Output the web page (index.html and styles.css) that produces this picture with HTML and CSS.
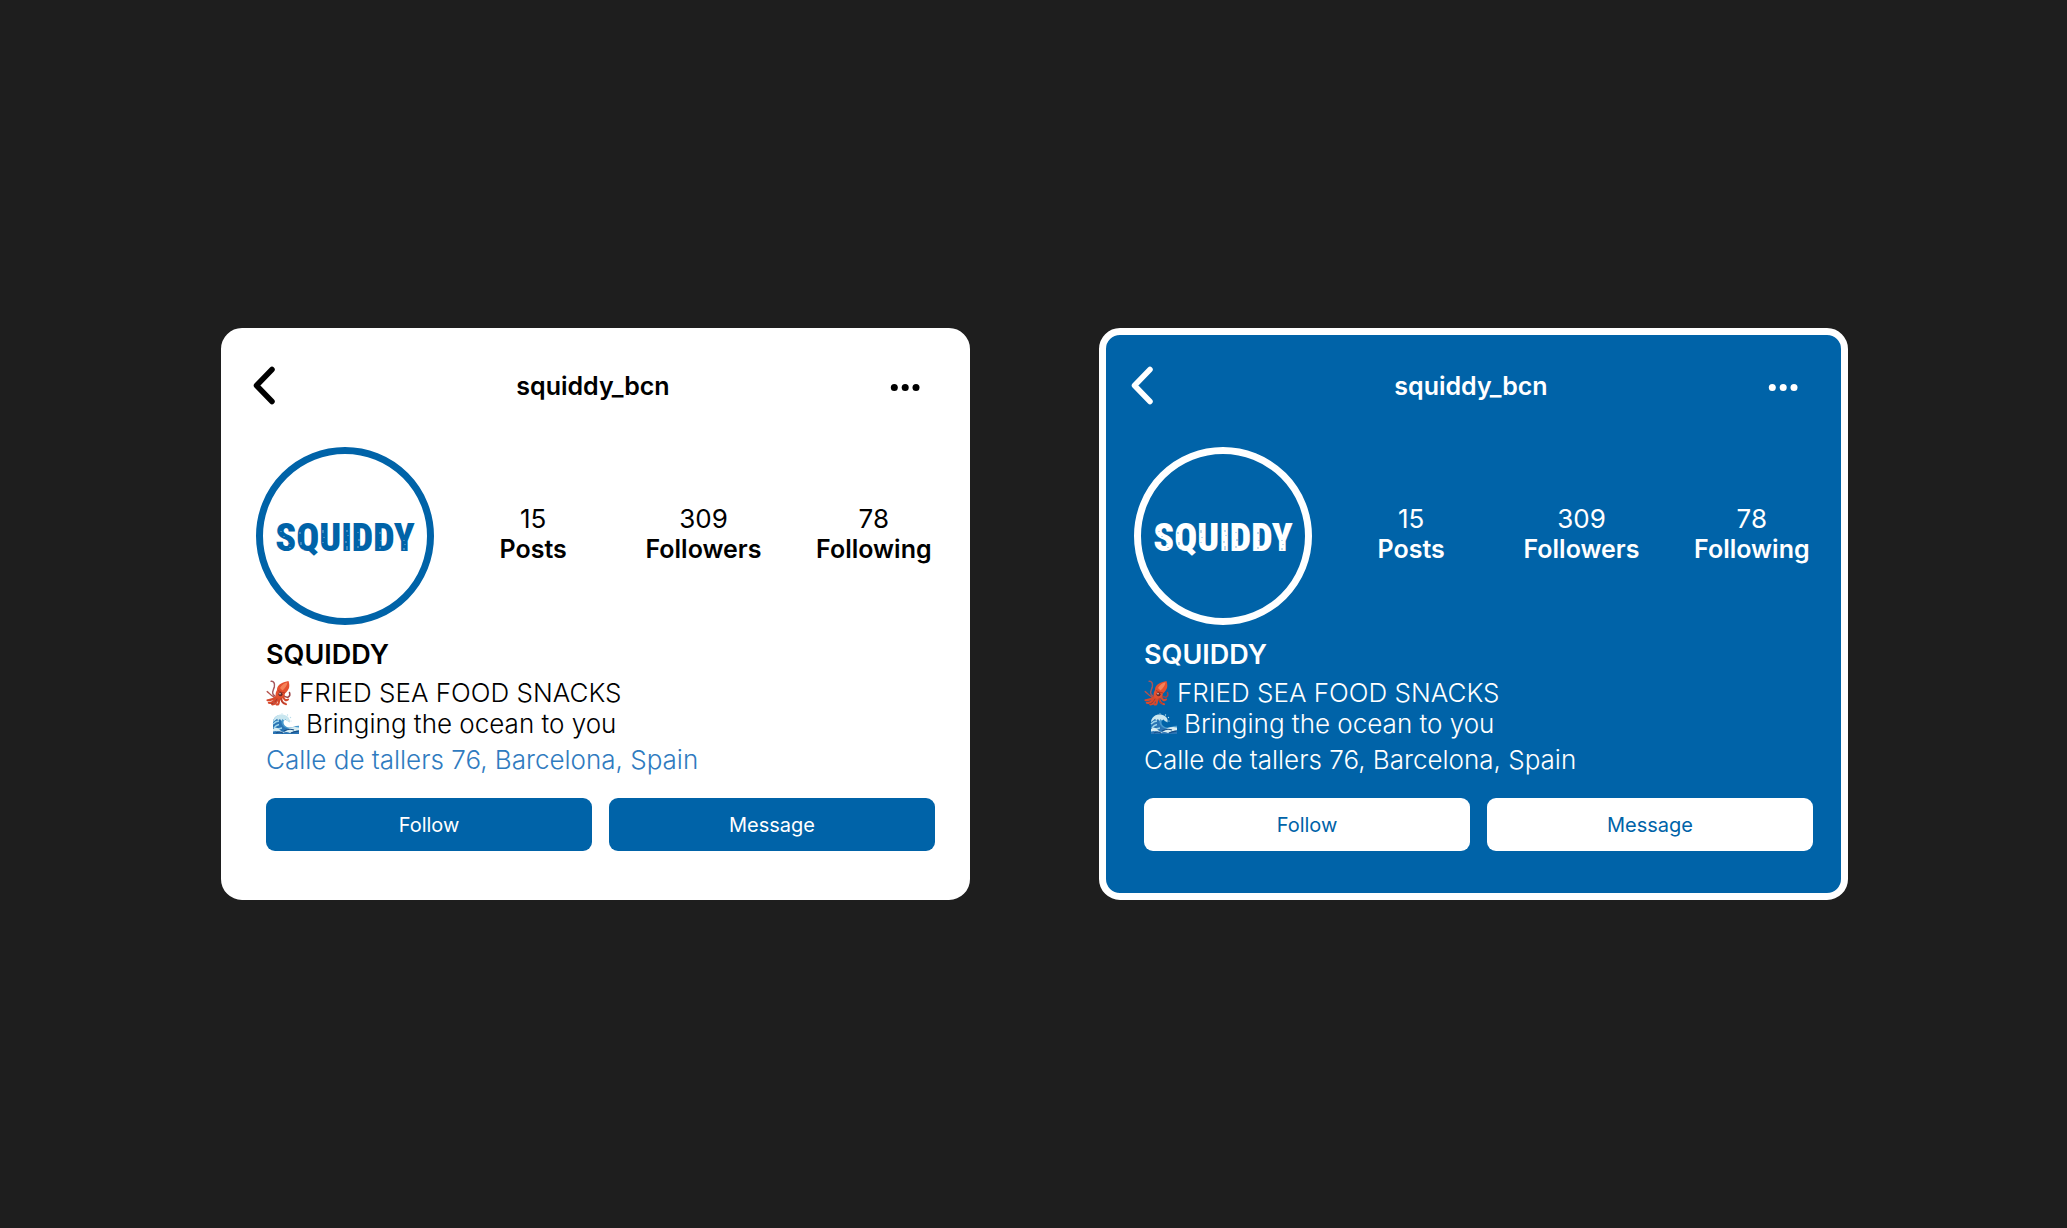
FILE: index.html
```html
<!DOCTYPE html>
<html lang="en">
<head>
  <meta charset="UTF-8">
  <title>squiddy_bcn</title>
  <meta name="viewport" content="width=device-width, initial-scale=1.0">
  <link rel="stylesheet" href="styles.css">
</head>
<body>

<!-- Shared drawings -->
<svg class="sprite" aria-hidden="true">
  <symbol id="back" viewBox="0 0 24 40">
    <path d="M20 3.5 4.500 19.5 20 35.5" fill="none" stroke="currentColor" stroke-width="5.500" stroke-linecap="round" stroke-linejoin="round"/>
  </symbol>
  <symbol id="dots" viewBox="0 0 44 40">
    <g fill="currentColor"><circle cx="4.3" cy="21.5" r="3.5"/><circle cx="15.2" cy="21.5" r="3.5"/><circle cx="26" cy="21.5" r="3.5"/></g>
  </symbol>
  <symbol id="squid" viewBox="0 0 26 26">
    <g fill="none" stroke-linecap="round">
      <path d="M9 16C4.500 14 7.500 10 8.300 7C9.200 3.200 7.500 1 5.200 1.300" stroke="#a5565c" stroke-width="1.500"/>
      <path d="M8 17C5 16 3 12.500 1.200 11.600" stroke="#b4534c" stroke-width="1.400"/>
      <path d="M17 15C21 19 25 17 23.500 12.500" stroke="#9d4446" stroke-width="1.500"/>
      <path d="M10 17C7 20 5 20 1.500 20.200M11 18C8 22 6 23.500 2.800 22.800M12 18C10 23 9 24.500 6.200 24.400M14 17C12 21 14 25 10.500 24.500M16 16C14 20 17 24 20 24.200M17 16C18 20 20 21 22 19.500" stroke="#d74a2d" stroke-width="2.100"/>
      <path d="M11 19C9 22 8 24 5.500 23.800M15 18C15 22 17 24 19 23" stroke="#8e3030" stroke-width="0.700"/>
    </g>
    <path d="M11 10C11 6 14 2.500 22.500 1C24 6 23.800 9.500 19 13.500C18.500 17 15 19.500 12 18.500C9 17.500 9 13 11 10Z" fill="#e4502f"/>
    <path d="M14 8C15.500 5 18.500 3 21.500 2.300C21 6 19 8 16.500 10.500Z" fill="#f48259"/>
    <path d="M12 10.500Q15 12.500 19 13" fill="none" stroke="#b93726" stroke-width="1"/>
    <circle cx="14.500" cy="14.300" r="2" fill="#652b2b"/><circle cx="14" cy="13.800" r="0.700" fill="#fff"/>
  </symbol>
  <symbol id="wave" viewBox="0 0 27 22">
    <path d="M1 21V8C2.500 3 7 1 12 2.500C16 3.500 18 6.500 17.300 9.500C15.500 7 13.500 6.500 12 7.500C10.500 10 12.500 14 17 14.500C20 15 23 12.500 27 12.800V21Z" fill="#4798cc"/>
    <path d="M1 9.500Q4 4 10 5.500Q8 10 12 14Q17 18 27 15.500V21H1Z" fill="#2a74b4"/>
    <path d="M1 11Q4 8 7 8M2 15Q4 12 7 11.500M4 18Q7 15 10 15" fill="none" stroke="#9ed6ec" stroke-width="1.500"/>
    <path d="M1 9C2 3 7 .5 12.500 2C16.500 3 18.500 6.500 17.300 9.500Q16 8 15 8.200L13.500 6.200 12 7.500 10.500 6 9.300 8 8 6 6 7.500 5.200 5.800Z" fill="#c9e6ef"/>
    <path d="M1 16Q5 13 8 17T15 17T27 14.500V17Q22 18 18 20Q14 18 11 20Q6 17 1 18.500Z" fill="#d8edf2"/>
    <path d="M12 18Q17 15 22 17M4 20Q8 18 11 20.200M19 20Q23 18 26.500 18.500" fill="none" stroke="#184f87" stroke-width="1.100"/>
    <g fill="#b8dcea"><circle cx="15.500" cy="2" r=".7"/><circle cx="18.500" cy="4.500" r=".7"/><circle cx="10" cy=".8" r=".6"/><circle cx="19" cy="8" r=".6"/></g>
  </symbol>
  <!-- worn print marks over the logo -->
  <symbol id="wear" viewBox="0 0 164 164">
    <path d="M18 77v1m3 4v1m5 6v1m1 3v1M37 78v2m1 8v3m2 4v1M60 76v3m1 4v1m-1 4v1M84 76v2m1 3v1m-2 5v2m1 3v4M95 78v1m1 6v2m-1 5v2M117 78v2m1 6v1m-1 6v2M141 86v1m1 3v1m-1 3v2" fill="none" stroke="currentColor" stroke-width="1" opacity=".5"/>
  </symbol>
</svg>

<main class="board">

  <!-- Light card -->
  <article class="card light">
    <header class="topbar">
      <button class="icon-btn" type="button" aria-label="Back"><svg width="24" height="40"><use href="#back"/></svg></button>
      <h1 class="handle">squiddy_bcn</h1>
      <button class="icon-btn more" type="button" aria-label="More options"><svg width="44" height="40"><use href="#dots"/></svg></button>
    </header>

    <section class="summary">
      <div class="avatar">
        <span class="logo">SQUIDDY</span>
        <svg class="wear"><use href="#wear"/></svg>
      </div>
      <ul class="stats">
        <li>15<b>Posts</b></li>
        <li>309<b>Followers</b></li>
        <li>78<b>Following</b></li>
      </ul>
    </section>

    <section class="bio">
      <h2 class="name">SQUIDDY</h2>
      <p class="line"><svg width="26" height="26"><use href="#squid"/></svg>FRIED SEA FOOD SNACKS</p>
      <p class="line indent"><svg width="27" height="22"><use href="#wave"/></svg>Bringing the ocean to you</p>
      <a class="place" href="#">Calle de tallers 76, Barcelona, Spain</a>
      <div class="actions">
        <button class="btn" type="button">Follow</button>
        <button class="btn" type="button">Message</button>
      </div>
    </section>
  </article>

  <!-- Blue card -->
  <article class="card blue">
    <header class="topbar">
      <button class="icon-btn" type="button" aria-label="Back"><svg width="24" height="40"><use href="#back"/></svg></button>
      <h1 class="handle">squiddy_bcn</h1>
      <button class="icon-btn more" type="button" aria-label="More options"><svg width="44" height="40"><use href="#dots"/></svg></button>
    </header>

    <section class="summary">
      <div class="avatar">
        <span class="logo">SQUIDDY</span>
        <svg class="wear"><use href="#wear"/></svg>
      </div>
      <ul class="stats">
        <li>15<b>Posts</b></li>
        <li>309<b>Followers</b></li>
        <li>78<b>Following</b></li>
      </ul>
    </section>

    <section class="bio">
      <h2 class="name">SQUIDDY</h2>
      <p class="line"><svg width="26" height="26"><use href="#squid"/></svg>FRIED SEA FOOD SNACKS</p>
      <p class="line indent"><svg width="27" height="22"><use href="#wave"/></svg>Bringing the ocean to you</p>
      <a class="place" href="#">Calle de tallers 76, Barcelona, Spain</a>
      <div class="actions">
        <button class="btn" type="button">Follow</button>
        <button class="btn" type="button">Message</button>
      </div>
    </section>
  </article>

</main>

</body>
</html>
```

FILE: styles.css
```css
* { box-sizing: border-box; }
body { margin: 0; background: #1e1e1e; font-family: Inter, sans-serif; font-size: 26px; line-height: 31px; }
h1, h2, p, ul { margin: 0; padding: 0; }
button { font-family: inherit; cursor: pointer; border: none; padding: 0; }
svg { display: block; flex: none; }
.sprite { position: absolute; width: 0; height: 0; }

.board { min-height: 100vh; display: grid; grid-template-columns: repeat(auto-fit, minmax(640px, 1fr)); align-content: center; gap: 129px; padding: 40px 219px 40px 221px; }

.card { --ink: #000; --paper: #fff; --brand: #0063a8; --link: #2f7bc0; --on-brand: #fff; border: 7px solid #fff; border-radius: 21px; padding: 31px 0 42px; background: var(--paper); color: var(--ink); }
.card.blue { --ink: #fff; --paper: #0063a8; --brand: #fff; --link: #fff; --on-brand: #0063a8; }

.topbar { display: grid; grid-template-columns: 1fr auto 1fr; align-items: center; padding: 0 29px 0 24px; }
.icon-btn { background: none; color: inherit; justify-self: start; }
.icon-btn.more { justify-self: end; }
.handle { font-size: 25px; font-weight: 600; }

.summary { display: flex; align-items: center; gap: 14px; margin-top: 41px; padding: 0 4px 0 28px; }
.avatar { position: relative; flex: none; display: flex; align-items: center; justify-content: center; width: 178px; height: 178px; padding-top: 4px; border: 7px solid var(--brand); border-radius: 50%; color: var(--brand); }
.logo { font-family: "Roboto Condensed", Roboto, sans-serif; font-size: 38px; font-weight: 900; }
.wear { position: absolute; inset: 0; width: 100%; height: 100%; color: var(--paper); }
.stats { flex: 1; display: grid; grid-template-columns: repeat(3, 1fr); padding-bottom: 4px; list-style: none; text-align: center; }
.stats b { display: block; font-size: 25px; font-weight: 600; }

.bio { margin-top: 14px; padding: 0 28px 0 38px; }
.name { font-size: 27px; line-height: 32px; font-weight: 600; margin-bottom: 6px; }
.line { display: flex; align-items: center; gap: 7px; font-weight: 300; }
.indent { padding-left: 6px; }
.place { display: block; margin-top: 5px; font-weight: 300; color: var(--link); text-decoration: none; }
.actions { display: grid; grid-template-columns: 1fr 1fr; gap: 17px; margin-top: 23px; }
.btn { height: 53px; border-radius: 9px; background: var(--brand); color: var(--on-brand); font-size: 20px; }
```
